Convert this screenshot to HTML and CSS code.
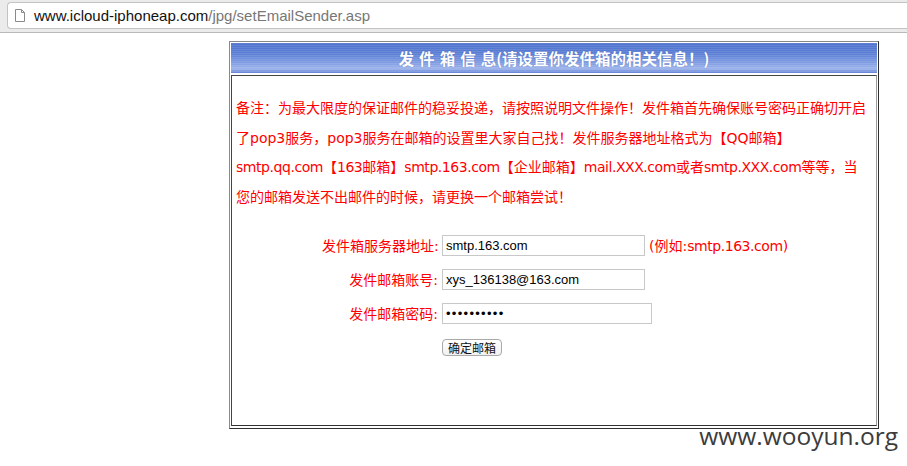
FILE: index.html
```html
<!DOCTYPE html>
<html>
<head>
<meta charset="utf-8">
<title>setEmailSender</title>
<link rel="stylesheet" href="styles.css">
</head>
<body>
<div class="toolbar">
  <div class="urlbar">
    <svg class="pageicon" width="10" height="13" viewBox="0 0 10 13"><path d="M0.5 0.5 H6.5 L9.5 3.5 V12.5 H0.5 Z M6.5 0.5 V3.5 H9.5" fill="#fff" stroke="#8a8a8a" stroke-width="1"/></svg>
    <span class="host">www.icloud-iphoneap.com</span><span class="path">/jpg/setEmailSender.asp</span>
  </div>
</div>
<div class="page">
  <div class="frame">
    <div class="head">发 件 箱 信 息(请设置你发件箱的相关信息！)</div>
    <div class="body">
      <p class="note">备注：为最大限度的保证邮件的稳妥投递，请按照说明文件操作！发件箱首先确保账号密码正确切开启<br>了pop3服务，pop3服务在邮箱的设置里大家自己找！发件服务器地址格式为【QQ邮箱】<br><span class="lat">smtp.qq.com</span>【<span class="lat">163</span>邮箱】<span class="lat">smtp.163.com</span>【企业邮箱】<span class="lat">mail.XXX.com</span>或者<span class="lat">smtp.XXX.com</span>等等，当<br>您的邮箱发送不出邮件的时候，请更换一个邮箱尝试！</p>
      <form class="form">
        <label class="lbl">发件箱服务器地址:</label>
        <div class="fld"><input class="inp" type="text" value="smtp.163.com"><span class="eg">(例如:<span class="lat">smtp.163.com</span>)</span></div>
        <label class="lbl">发件邮箱账号:</label>
        <div class="fld"><input class="inp" type="text" value="xys_136138@163.com"></div>
        <label class="lbl">发件邮箱密码:</label>
        <div class="fld"><input class="inp pwd" type="password" value="0123456789"></div>
        <span></span>
        <div class="fld btnrow"><button class="btn" type="button">确定邮箱</button></div>
      </form>
    </div>
  </div>
</div>
<div class="watermark">www.wooyun.org</div>
</body>
</html>
```
FILE: styles.css
```css
html, body {
  margin: 0;
  padding: 0;
  background: #fff;
}
body {
  position: relative;
  width: 907px;
  height: 466px;
  overflow: hidden;
  font-family: "DejaVu Sans", "Noto Sans CJK SC", sans-serif;
}
.toolbar {
  height: 33px;
  background: #ebebeb;
  border-bottom: 1px solid #b9b9b9;
  padding: 2px 0 0 7px;
  box-sizing: border-box;
}
.urlbar {
  height: 27px;
  background: #fff;
  border: 1px solid #c3c3c3;
  border-right: none;
  border-radius: 4px 0 0 4px;
  display: flex;
  align-items: center;
  padding-left: 7px;
  box-sizing: border-box;
  font-family: "Liberation Sans", Arial, sans-serif;
  font-size: 15px;
}
.pageicon {
  margin-right: 9px;
}
.host { color: #111; }
.path { color: #777; }

.page {
  padding: 8px 0 0 229px;
}
.frame {
  width: 650px;
  box-sizing: border-box;
  border: 1px solid;
  border-color: #8a8a8a #303030 #303030 #8a8a8a;
  padding: 1px 1px 2px 1px;
}
.head {
  height: 30px;
  line-height: 30px;
  text-align: center;
  color: #fff;
  font-weight: bold;
  font-size: 15.5px;
  word-spacing: 1.5px;
  font-family: "Noto Sans CJK SC", sans-serif;
  background:
    repeating-linear-gradient(to bottom, rgba(255,255,255,0.10) 0 1px, rgba(0,0,0,0) 1px 2px),
    linear-gradient(to bottom, #4f73cf 0%, #5b7ed5 35%, #7f9ce2 65%, #9cb3ec 85%, #6584d6 100%);
  text-shadow: 0 0 1px rgba(40,60,140,0.5);
}
.body {
  margin-top: 2px;
  height: 351px;
  box-sizing: border-box;
  border: 1px solid;
  border-color: #444 #9a9a9a #333 #444;
  padding: 18px 4px 0 4px;
}
.note {
  margin: 0;
  color: #ff0000;
  font-size: 14px;
  line-height: 29.5px;
  white-space: nowrap;
}
.lat {
  letter-spacing: -0.45px;
}
.form {
  margin: 16px 0 0 86px;
  display: grid;
  grid-template-columns: 116px auto;
  grid-auto-rows: 34px;
  column-gap: 4px;
  align-items: center;
}
.lbl {
  color: #ff0000;
  font-size: 14px;
  text-align: right;
  white-space: nowrap;
}
.fld {
  display: flex;
  align-items: center;
}
.inp {
  width: 203px;
  height: 21px;
  box-sizing: border-box;
  border: 1px solid #c8c8c8;
  padding: 0 3px;
  margin: 0;
  font-family: "Liberation Sans", Arial, sans-serif;
  font-size: 13px;
  color: #000;
  outline: none;
}
.pwd {
  width: 210px;
  letter-spacing: 1.3px;
}
.eg {
  color: #ff0000;
  font-size: 14px;
  margin-left: 4px;
  white-space: nowrap;
}
.btnrow {
  height: 35px;
}
.btn {
  width: 60px;
  height: 17px;
  padding: 0;
  margin: 0;
  border: 1px solid #a9a9a9;
  border-radius: 4px;
  background: linear-gradient(#ffffff, #f1f1f1);
  font-family: "Noto Sans CJK SC", sans-serif;
  font-size: 12px;
  line-height: 15px;
  color: #111;
}
.watermark {
  position: absolute;
  right: 9px;
  top: 419px;
  font-family: "Open Sans", sans-serif;
  font-size: 24.5px;
  color: #3c3c3c;
}
```
